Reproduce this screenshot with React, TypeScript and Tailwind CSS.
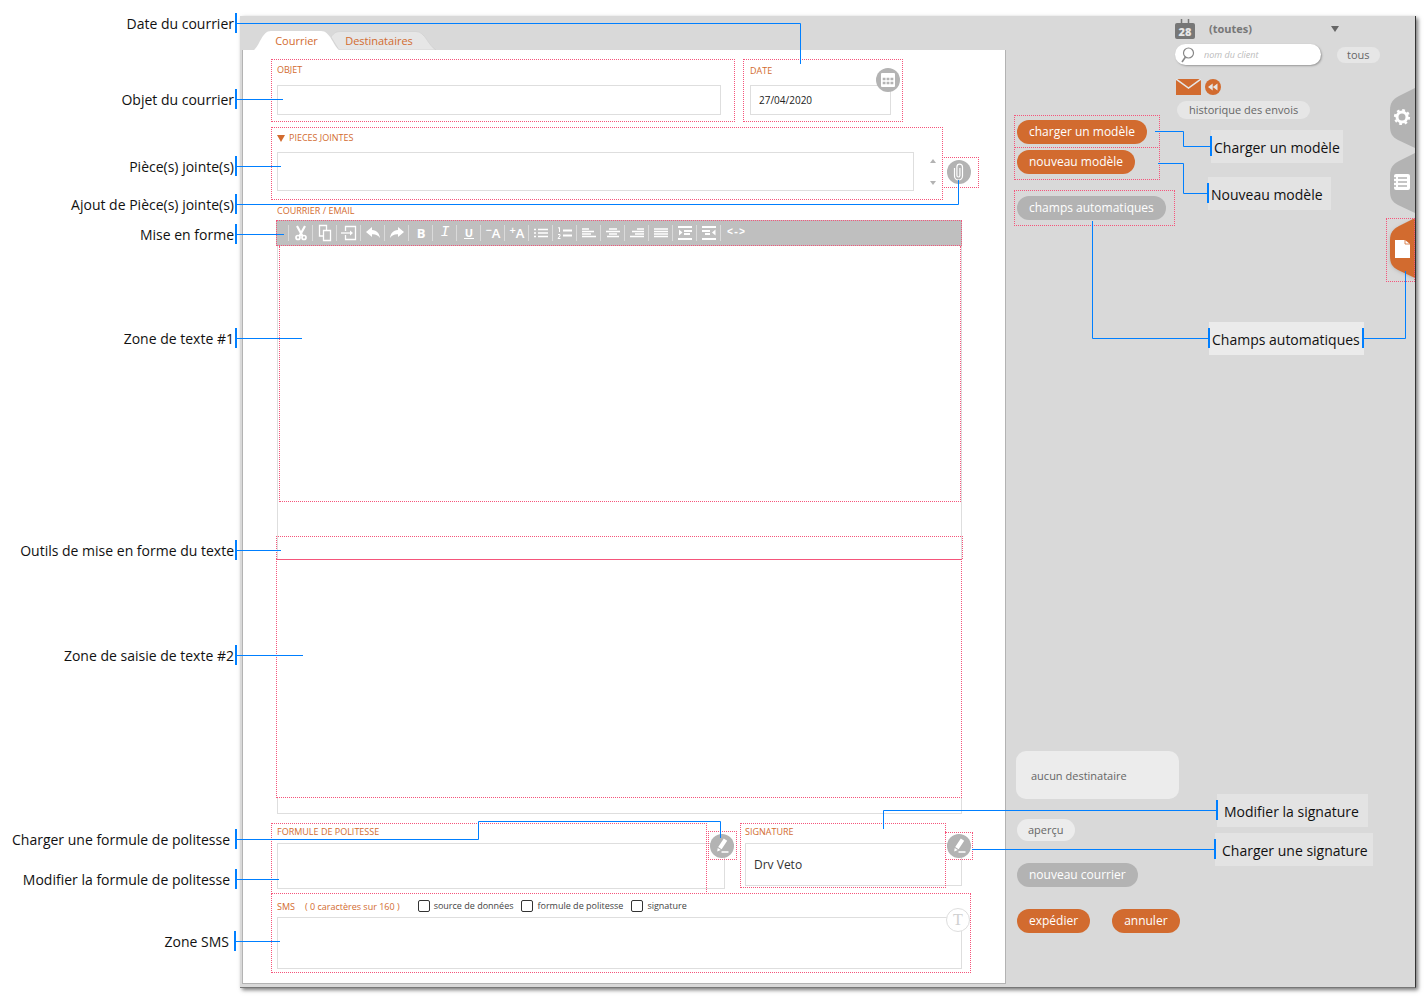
import type { ReactNode } from "react";

const FRAME = "pointer-events-none absolute border border-dotted border-[#f5557b]";
const CAPTION = "block text-[9px] leading-5 text-[#d26b2f]";
const FIELD = "block w-full resize-none border border-[#dedede] bg-white outline-none";
const PILL = "w-fit rounded-full whitespace-nowrap px-3 text-xs leading-6 text-white";

const leftCallouts = [
  { text: "Date du courrier", place: "top-[13px] right-[3px] pr-px" },
  { text: "Objet du courrier", place: "top-[89px] right-[3px] pr-px" },
  { text: "Pièce(s) jointe(s)", place: "top-[156px] right-[3px] pr-px" },
  { text: "Ajout de Pièce(s) jointe(s)", place: "top-[194px] right-[3px] pr-px" },
  { text: "Mise en forme", place: "top-[224px] right-[3px] pr-px" },
  { text: "Zone de texte #1", place: "top-[328px] right-[3px] pr-px" },
  { text: "Outils de mise en forme du texte", place: "top-[540px] right-[3px] pr-px" },
  { text: "Zone de saisie de texte #2", place: "top-[645px] right-[3px] pr-px" },
  { text: "Charger une formule de politesse", place: "top-[829px] right-[3px] pr-[5px]" },
  { text: "Modifier la formule de politesse", place: "top-[869px] right-[3px] pr-[5px]" },
  { text: "Zone SMS", place: "top-[931px] right-[4px] pr-[5px]" },
];

const rightCallouts = [
  { text: "Charger un modèle", place: "top-[130px] right-[84px] w-[132px] pl-[3px] bg-[#e3e3e3]", end: false },
  { text: "Nouveau modèle", place: "top-[177px] right-[96px] w-[123px] pl-[3px] bg-[#e3e3e3]", end: false },
  { text: "Champs automatiques", place: "top-[322px] right-[63px] w-[155px] pl-[3px] bg-[#ebebeb]", end: true },
  { text: "Modifier la signature", place: "top-[794px] right-[59px] w-[151px] pl-[7px] bg-[#e3e3e3]", end: false },
  { text: "Charger une signature", place: "top-[833px] right-[54px] w-[158px] pl-[7px] bg-[#e3e3e3]", end: false },
];

function Glyph({ children }: { children: ReactNode }) {
  return (
    <svg viewBox="0 0 20 20" className="h-5 w-5" fill="none" stroke="#fff" strokeWidth="1.3" aria-hidden="true">
      {children}
    </svg>
  );
}

const tools: { name: string; icon: ReactNode }[] = [
  {
    name: "Couper",
    icon: (
      <Glyph>
        <path d="M6 3l5.500 10M14 3L8.500 13" strokeWidth="2.200" />
        <circle cx="7" cy="14.500" r="2" strokeWidth="1.700" />
        <circle cx="13" cy="14.500" r="2" strokeWidth="1.700" />
      </Glyph>
    ),
  },
  {
    name: "Copier",
    icon: (
      <Glyph>
        <path d="M8 13H4.500V2.500h7V7" />
        <path d="M8.500 7.500h7v10h-7z" />
      </Glyph>
    ),
  },
  {
    name: "Coller",
    icon: (
      <Glyph>
        <path d="M6.500 8V3.500h10v13h-10V12" />
        <path d="M2 10h10" />
        <path d="M11 7.500l3 2.500-3 2.500z" fill="#fff" stroke="none" />
      </Glyph>
    ),
  },
  {
    name: "Annuler la saisie",
    icon: (
      <Glyph>
        <path d="M3 9l6-5v3c5 .3 7.500 3.500 8 8-2-3-4.500-4-8-3.800V14z" fill="#fff" stroke="none" />
      </Glyph>
    ),
  },
  {
    name: "Rétablir",
    icon: (
      <Glyph>
        <path d="M17 9l-6-5v3c-5 .3-7.500 3.500-8 8 2-3 4.500-4 8-3.800V14z" fill="#fff" stroke="none" />
      </Glyph>
    ),
  },
  { name: "Gras", icon: <b className="text-[13px]">B</b> },
  { name: "Italique", icon: <i className="font-['Liberation_Mono',monospace] text-[15px]">I</i> },
  { name: "Souligné", icon: <b className="border-b border-white px-px text-[11px] leading-[11px]">U</b> },
  { name: "Réduire", icon: <span className="flex text-[13px] font-semibold"><sup className="top-0 text-[11px] leading-[10px]">−</sup>A</span> },
  { name: "Agrandir", icon: <span className="flex text-[13px] font-semibold"><sup className="top-0 text-[11px] leading-[10px]">+</sup>A</span> },
  {
    name: "Liste à puces",
    icon: (
      <Glyph>
        <path d="M3 6.500h2M3 10h2M3 13.500h2M7 6.500h10M7 10h10M7 13.500h10" />
      </Glyph>
    ),
  },
  {
    name: "Liste numérotée",
    icon: (
      <Glyph>
        <path d="M8 7.500h9M8 12.500h9" strokeWidth="2" />
        <path d="M3 5l1.500-.5V9M3 11.500h2V13l-2 2.500h2.500" strokeWidth="1" />
      </Glyph>
    ),
  },
  { name: "Aligner à gauche", icon: <Glyph><path d="M3 6h7M3 8.500h12M3 11h9M3 13.500h14" /></Glyph> },
  { name: "Centrer", icon: <Glyph><path d="M6 6h8M3 8.500h14M6 11h8M4 13.500h12" /></Glyph> },
  { name: "Aligner à droite", icon: <Glyph><path d="M10 6h7M5 8.500h12M8 11h9M3 13.500h14" /></Glyph> },
  { name: "Justifier", icon: <Glyph><path d="M3 6h14M3 8.500h14M3 11h14M3 13.500h14" /></Glyph> },
  {
    name: "Augmenter le retrait",
    icon: (
      <Glyph>
        <path d="M3 4h14M3 16h14M9 8h8M9 11h6" strokeWidth="1.800" />
        <path d="M4 6.500v6l3.500-3z" fill="#fff" stroke="none" />
      </Glyph>
    ),
  },
  {
    name: "Diminuer le retrait",
    icon: (
      <Glyph>
        <path d="M3 4h14M3 16h14M3 8h8M6 11h5" strokeWidth="1.800" />
        <path d="M16.500 6.500v6L13 9.500z" fill="#fff" stroke="none" />
      </Glyph>
    ),
  },
  { name: "Code source", icon: <b className="font-['Liberation_Mono',monospace] text-[10px] whitespace-nowrap">&lt;-&gt;</b> },
];

function RoundButton({ label, place, children }: { label: string; place: string; children: ReactNode }) {
  return (
    <button type="button" aria-label={label} className={`absolute flex h-6 w-6 items-center justify-center rounded-full bg-[#b3b3b3] ${place}`}>
      {children}
    </button>
  );
}

function Pencil() {
  return (
    <svg viewBox="0 0 24 24" className="h-6 w-6" aria-hidden="true">
      <path d="M13.800 4.500l3.400 2.200-5.600 8.500-3.400-2.200zM7.700 13.900l3.100 2-3.600 1.600z" fill="#fff" />
      <path d="M11.500 18h7" stroke="#fff" strokeWidth="1.500" />
    </svg>
  );
}

function Check({ label }: { label: string }) {
  return (
    <label className="flex items-center gap-1 text-[9px] leading-3 text-[#444]">
      <input type="checkbox" className="h-3 w-3 appearance-none rounded-[2px] border border-[#333] bg-white checked:bg-[#333]" />
      {label}
    </label>
  );
}

function Tabs() {
  return (
    <div role="tablist" className="flex h-[34px] items-end pl-3 text-[11px] leading-[18px] text-[#d26b2f]">
      <button role="tab" aria-selected="true" className="relative z-10 h-[19px] w-[85px]">
        <svg viewBox="0 0 85 19" className="absolute inset-0 h-full w-full" aria-hidden="true">
          <path d="M0 19C6 14 8 0 17 0h50c9 0 12 14 18 19z" fill="#fff" />
        </svg>
        <span className="relative">Courrier</span>
      </button>
      <button role="tab" aria-selected="false" className="relative -ml-2 h-[19px] w-[106px] pr-[10px]">
        <svg viewBox="0 0 106 19" className="absolute inset-0 h-full w-full" aria-hidden="true">
          <path d="M0 6C3 2 5 .5 10 .5h75c9 0 12 14 20 18.500H8z" fill="#e6e6e6" stroke="#cecece" strokeWidth=".6" />
        </svg>
        <span className="relative">Destinataires</span>
      </button>
    </div>
  );
}

function LetterForm() {
  return (
    <form className="flex-1 border-x border-b border-[#b3b3b3] bg-white pt-[9px] pb-[10px]" onSubmit={(e) => e.preventDefault()}>
      <div className="mr-[102px] ml-7 flex gap-2">
        <div className="h-[63px] flex-1 border border-dotted border-[#f5557b] pr-[13px] pl-[5px]">
          <label htmlFor="objet" className={`${CAPTION} mb-[5px]`}>OBJET</label>
          <input id="objet" className={`${FIELD} h-[30px] px-2 text-[11px]`} />
        </div>
        <div className="relative h-[63px] w-40 border border-dotted border-[#f5557b] pr-[11px] pl-[6px]">
          <label htmlFor="date" className={`${CAPTION} pt-px mb-[4px]`}>DATE</label>
          <input id="date" defaultValue="27/04/2020" className={`${FIELD} h-[30px] px-2 text-[10px] text-[#222]`} />
          <RoundButton label="Choisir une date" place="top-2 right-[2px]">
            <svg viewBox="0 0 14 14" className="h-[14px] w-[14px]" aria-hidden="true">
              <rect width="14" height="14" rx="1" fill="#fff" />
              <path d="M1.700 6h10.600M1.700 10h10.600" stroke="#b3b3b3" strokeWidth="2.600" strokeDasharray="2.800 1.100" />
            </svg>
          </RoundButton>
        </div>
      </div>

      <div className="mt-[5px] mr-[26px] ml-7 flex">
        <div className="h-[73px] flex-1 border border-dotted border-[#f5557b] pl-[5px]">
          <label htmlFor="pieces" className="mb-[4px] flex items-center gap-1 text-[9px] leading-5 text-[#d26b2f]">
            <svg viewBox="0 0 8 7" className="h-[7px] w-2" aria-hidden="true"><path d="M0 0h8L4 7z" fill="#d26b2f" /></svg>
            PIECES JOINTES
          </label>
          <div className="flex gap-[15px] pr-[5px]">
            <textarea id="pieces" className={`${FIELD} h-[39px] min-w-0 flex-1`} />
            <div className="flex w-2 flex-col justify-between pt-[6px] pb-[5px]">
              <button type="button" aria-label="Monter">
                <svg viewBox="0 0 8 5" className="h-[5px] w-2" aria-hidden="true"><path d="M1 5h6L4 1z" fill="#b3b3b3" /></svg>
              </button>
              <button type="button" aria-label="Descendre">
                <svg viewBox="0 0 8 5" className="h-[5px] w-2" aria-hidden="true"><path d="M1 0h6L4 4z" fill="#b3b3b3" /></svg>
              </button>
            </div>
          </div>
        </div>
        <div className="relative mt-[30px] -ml-px h-[31px] w-[37px] border border-dotted border-[#f5557b]">
          <RoundButton label="Ajouter une pièce jointe" place="top-[2px] left-1">
            <svg viewBox="0 0 12 18" className="h-[18px] w-3" fill="none" stroke="#fff" strokeWidth="1.200" aria-hidden="true">
              <path d="M1.500 5v8a4 4 0 0 0 8 0V4a2.800 2.800 0 0 0-5.600 0v8.500a1.500 1.500 0 0 0 3 0V5" />
            </svg>
          </RoundButton>
        </div>
      </div>

      <div className="mr-[43px] ml-[34px] pt-px">
        <span className={CAPTION}>COURRIER / EMAIL</span>
        <div className="relative -mt-px -ml-px flex h-[26px] items-center border border-dotted border-[#f5557b] bg-[#bfbfbf] pl-[11px] text-white">
          {tools.map((tool) => (
            <button key={tool.name} type="button" aria-label={tool.name} className="flex h-4 w-6 items-center justify-center border-l border-[#dadada] pl-px leading-4 last:w-[30px]">
              {tool.icon}
            </button>
          ))}
        </div>
        <div className="relative border-x border-b border-[#dedede]">
          <textarea aria-label="Zone de texte 1" className="ml-px block h-64 w-[calc(100%-1px)] resize-none border border-t-0 border-dotted border-[#f5557b] bg-white outline-none" />
          <div className="h-[34px]" />
          <div className="-mx-[2px] h-[23px] border border-b-0 border-dotted border-[#f5557b]" />
          <textarea aria-label="Zone de texte 2" className="-ml-[2px] block h-[239px] w-[calc(100%+3px)] resize-none border border-dotted border-[#f5557b] [border-top-style:solid] bg-white outline-none" />
          <div className="h-[15px]" />
        </div>
      </div>

      <div className="mr-[43px] ml-[34px] flex gap-5 pt-[9px]">
        <div className="relative flex-1">
          <label htmlFor="politesse" className={`${CAPTION} -mt-px`}>FORMULE DE POLITESSE</label>
          <textarea id="politesse" className={`${FIELD} mt-px h-[46px]`} />
          <div className={`${FRAME} top-0 right-[18px] bottom-[-5px] -left-[6px]`} />
          <div className={`${FRAME} top-[8px] -right-[12px] h-[29px] w-[29px]`} />
          <RoundButton label="Charger une formule de politesse" place="top-[11px] -right-[9px]"><Pencil /></RoundButton>
        </div>
        <div className="relative w-[217px]">
          <label htmlFor="signature" className={`${CAPTION} -mt-px`}>SIGNATURE</label>
          <input id="signature" defaultValue="Drv Veto" className={`${FIELD} mt-px h-[43px] px-2 text-xs text-[#333]`} />
          <div className={`${FRAME} top-0 right-4 h-[65px] -left-[5px]`} />
          <div className={`${FRAME} top-[9px] -right-[11px] h-[28px] w-[28px]`} />
          <RoundButton label="Charger une signature" place="top-[11px] -right-[9px]"><Pencil /></RoundButton>
        </div>
      </div>

      <div className="relative mt-1 mr-[34px] ml-7 h-20 border border-dotted border-[#f5557b] pr-2 pl-[5px]">
        <div className="flex h-[23px] items-center gap-[18px]">
          <label htmlFor="sms" className="flex gap-[10px] pt-[3px] text-[9px] leading-5 text-[#d26b2f]">
            <span>SMS</span>
            <span>( 0 caractères sur 160 )</span>
          </label>
          <div className="flex gap-2">
            <Check label="source de données" />
            <Check label="formule de politesse" />
            <Check label="signature" />
          </div>
        </div>
        <textarea id="sms" className={`${FIELD} h-[52px]`} />
        <button type="button" aria-label="Insérer du texte" className="absolute top-[14px] right-0 h-6 w-6 rounded-full border border-[#dedede] bg-white font-['Liberation_Serif',serif] text-base leading-5 text-[#d0d0d0]">
          T
        </button>
      </div>
    </form>
  );
}

function SideTab({ label, active, children }: { label: string; active?: boolean; children: ReactNode }) {
  return (
    <button aria-label={label} className="h-[60px] w-[26px]">
      <svg viewBox="0 0 26 60" className={active ? "h-[60px] w-[26px] overflow-visible drop-shadow" : "h-[60px] w-[26px]"} aria-hidden="true">
        <path d="M26 0L10 8C4 11 1 15 1 22v16c0 7 2 11 8 14l17 8z" fill={active ? "#d26b2f" : "#b3b3b3"} />
        {children}
      </svg>
    </button>
  );
}

function Sidebar() {
  return (
    <aside className="flex w-[409px] text-[#666]">
      <div className="flex w-[169px] flex-col pt-[99px] pl-2">
        <div className="flex h-[33px] w-[146px] items-center border border-dotted border-[#f5557b] pl-[2px]">
          <button className={`${PILL} bg-[#d26b2f]`}>charger un modèle</button>
        </div>
        <div className="-mt-px flex h-[33px] w-[146px] items-start border border-dotted border-[#f5557b] pt-[2px] pl-[2px]">
          <button className={`${PILL} bg-[#d26b2f]`}>nouveau modèle</button>
        </div>
        <div className="mt-[10px] flex h-9 w-[161px] items-center border border-dotted border-[#f5557b] pl-[2px]">
          <button className={`${PILL} bg-[#b3b3b3]`}>champs automatiques</button>
        </div>
        <div className="mt-auto flex flex-col pb-[54px] pl-[3px]">
          <div className="-ml-px h-12 w-[163px] rounded-[10px] bg-[#ececec] px-[15px] text-[11px] leading-[49px]">aucun destinataire</div>
          <button className="mt-5 w-fit rounded-full bg-[#ececec] px-[11px] text-[11px] leading-[22px]">aperçu</button>
          <button className={`${PILL} mt-[22px] bg-[#b3b3b3]`}>nouveau courrier</button>
          <div className="mt-[22px] flex gap-[22px]">
            <button className={`${PILL} bg-[#d26b2f]`}>expédier</button>
            <button className={`${PILL} bg-[#d26b2f]`}>annuler</button>
          </div>
        </div>
      </div>

      <div className="flex-1 pt-[3px]">
        <div className="flex items-center gap-[14px]">
          <svg viewBox="0 0 20 20" className="h-5 w-5" aria-hidden="true">
            <path d="M2 4h16a2 2 0 0 1 2 2v12a2 2 0 0 1-2 2H2a2 2 0 0 1-2-2V6a2 2 0 0 1 2-2z" fill="#777" />
            <path d="M6.500 0v5M13.500 0v5" stroke="#777" strokeWidth="1.500" />
            <text x="10" y="16.500" textAnchor="middle" fontSize="11" fontWeight="800" fill="#e6e6e6">28</text>
          </svg>
          <div className="relative w-[132px]">
            <select aria-label="Catégorie" className="block w-full appearance-none bg-transparent pb-px text-[11px] leading-[19px] font-bold text-[#777] outline-none">
              <option>(toutes)</option>
            </select>
            <svg viewBox="0 0 8 6" className="pointer-events-none absolute top-[7px] right-[2px] h-[6px] w-2" aria-hidden="true"><path d="M0 0h8L4 6z" fill="#666" /></svg>
          </div>
        </div>
        <div className="mt-[5px] flex items-center gap-4">
          <label className="flex h-[21px] w-[146px] items-center gap-[9px] rounded-full bg-white pl-[6px] shadow-[1px_1px_2px_#999]">
            <svg viewBox="0 0 14 16" className="h-4 w-[14px] shrink-0" fill="none" stroke="#888" strokeWidth="1.200" aria-hidden="true">
              <circle cx="7.500" cy="6" r="5" />
              <path d="M4.500 10L1 15" strokeWidth="1.600" />
            </svg>
            <input aria-label="Nom du client" placeholder="nom du client" className="min-w-0 flex-1 bg-transparent text-[9px] italic outline-none placeholder:text-[#bbb]" />
          </label>
          <button className="rounded-full bg-[#e6e6e6] px-[10px] text-[11px] leading-4">tous</button>
        </div>
        <div className="mt-[14px] flex items-center gap-1 pl-px">
          <svg viewBox="0 0 25 16" className="h-4 w-[25px]" aria-hidden="true">
            <path d="M0 0h25v16H0z" fill="#d26b2f" />
            <path d="M0 0l12.500 9L25 0" fill="none" stroke="#e6e6e6" strokeWidth="1.500" />
          </svg>
          <svg viewBox="0 0 16 16" className="h-4 w-4" aria-hidden="true">
            <circle cx="8" cy="8" r="8" fill="#d26b2f" />
            <path d="M7.700 4.500v7L3 8zM12.500 4.500v7L7.800 8z" fill="#e6e6e6" />
          </svg>
        </div>
        <button className="mt-[6px] ml-[2px] rounded-full bg-[#e6e6e6] px-3 text-[11px] leading-[18px] whitespace-nowrap">historique des envois</button>
      </div>

      <div className="relative flex w-[26px] flex-col gap-[5px] pt-[72px]">
        <SideTab label="Réglages">
          <circle cx="13" cy="29" r="5" fill="none" stroke="#fff" strokeWidth="3" />
          <circle cx="13" cy="29" r="7" fill="none" stroke="#fff" strokeWidth="2.200" strokeDasharray="2.750 2.750" />
        </SideTab>
        <SideTab label="Liste">
          <rect x="5" y="21" width="16" height="16" rx="2" fill="#fff" />
          <path d="M9 25h9M9 29h9M9 33h9" stroke="#b3b3b3" strokeWidth="1.300" />
          <path d="M4 25h3M4 29h3M4 33h3" stroke="#b3b3b3" strokeWidth="1.300" />
        </SideTab>
        <SideTab label="Modèles" active>
          <path d="M6 22h10l5 4v14H6z" fill="#fff" />
          <path d="M16 22v4h5" fill="none" stroke="#d26b2f" strokeWidth=".8" />
        </SideTab>
        <div className={`${FRAME} top-[202px] right-0 h-16 w-[29px]`} />
      </div>
    </aside>
  );
}

export default function App() {
  return (
    <div className="relative flex min-h-screen bg-white pt-4 pr-[11px] pb-2 font-['Open_Sans','Noto_Sans',sans-serif]">
      <div className="w-60 shrink-0" />
      <main className="flex flex-1 border-r border-b border-r-[#333] border-b-[#777] bg-[#d9d9d9] shadow-[2px_2px_4px_#777]">
        <div className="flex flex-1 flex-col pb-[3px] pl-[2px]">
          <Tabs />
          <LetterForm />
        </div>
        <Sidebar />
      </main>

      <div className="pointer-events-none absolute inset-y-0 left-0 w-60 text-sm leading-[22px] text-[#111]">
        {leftCallouts.map((c) => (
          <div key={c.text} className={`absolute h-5 border-r-2 border-[#007fff] whitespace-nowrap ${c.place}`}>
            {c.text}
          </div>
        ))}
      </div>
      {rightCallouts.map((c) => (
        <div key={c.text} className={`pointer-events-none absolute flex h-[33px] items-center text-sm whitespace-nowrap text-[#111] ${c.place}`}>
          <span className="absolute top-[6px] left-[-1px] h-5 w-[2px] bg-[#007fff]" />
          <span className="pt-[2px]">{c.text}</span>
          {c.end && <span className="absolute top-[6px] right-0 h-5 w-[2px] bg-[#007fff]" />}
        </div>
      ))}
      <svg className="pointer-events-none absolute top-0 left-0 h-[996px] w-[1427px]" fill="none" stroke="#007fff" aria-hidden="true">
        <path d="M237 23.500H800.500V64M237 99.500H283M237 166.500H281M237 204.500H958.500V180M237 234.500H284M237 338.500H302M237 550.500H281M237 655.500H303M237 839.500H478.500V821.500H720.500V838M237 879.500H279M236 941.500H280" />
        <path d="M1155 131.500H1183.500V146.500H1210M1158 163.500H1183.500V193.500H1207M1092.500 221V338.500H1208M1364 338.500H1405.500V271M883.500 829V810.500H1216M972 849.500H1214" />
      </svg>
    </div>
  );
}
